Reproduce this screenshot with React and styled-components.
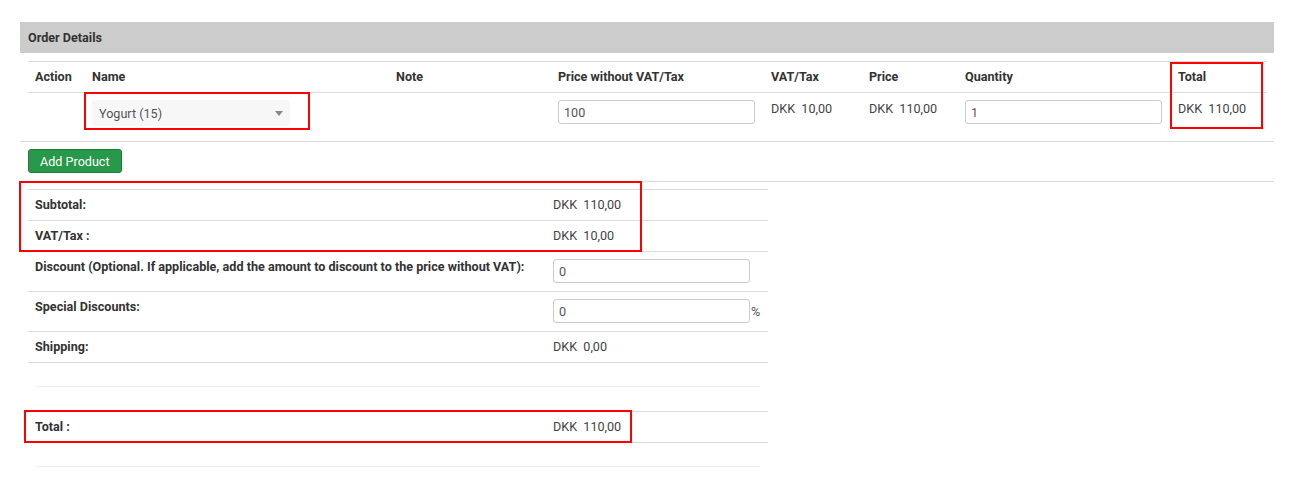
import styled, { createGlobalStyle } from "styled-components";

const Global = createGlobalStyle`
  body {
    margin: 0;
    background: #fff;
    font-family: Roboto, "Liberation Sans", Arial, sans-serif;
    font-size: 12.6px;
    color: #333;
  }
`;

const Page = styled.div`
  position: relative;
  padding: 22px 20px 0;
  width: 1254px;
`;

const PanelHead = styled.div`
  height: 31px;
  line-height: 31px;
  padding-left: 8px;
  background: #cccccc;
  font-weight: 700;
  color: #333;
`;

const OrderTable = styled.table`
  width: 1239px;
  margin: 8px 7px 0 8px;
  border-collapse: separate;
  border-spacing: 0;
  table-layout: fixed;
`;

const Th = styled.th`
  text-align: left;
  font-weight: 700;
  padding: 6px 7px 7px;
  line-height: 17px;
  border-top: 1px solid #dddddd;
  color: #333;
`;

const Td = styled.td`
  vertical-align: top;
  padding: 7px 7px 15px;
  line-height: 17px;
  border-top: 1px solid #dddddd;
  color: #444;
  white-space: nowrap;
`;

const Select = styled.div`
  box-sizing: border-box;
  width: 198px;
  height: 26px;
  display: flex;
  align-items: center;
  justify-content: space-between;
  padding: 0 7px;
  background: #f7f7f7;
  border-radius: 4px;
  color: #555;
`;

const Caret = styled.span`
  width: 0;
  height: 0;
  border-left: 4px solid transparent;
  border-right: 4px solid transparent;
  border-top: 5px solid #888;
`;

const Input = styled.input`
  box-sizing: border-box;
  width: 197px;
  height: 24px;
  padding: 0 5px;
  border: 1px solid #cccccc;
  border-radius: 3px;
  font-family: inherit;
  font-size: 12.6px;
  color: ${(p) => p.$tone || "#555"};
  background: #fff;
  outline: none;
`;

const Money = styled.span`
  display: inline-block;
  color: #444;
`;

const ActionBar = styled.div`
  padding: 7px 8px 8px;
  border-top: 1px solid #dddddd;
  border-bottom: 1px solid #dddddd;
`;

const GreenButton = styled.button`
  box-sizing: border-box;
  height: 24px;
  padding: 0 11px;
  border: 1px solid #1f7e3a;
  border-radius: 3px;
  background: #28984a;
  color: #fff;
  font-family: inherit;
  font-size: 12.6px;
  cursor: pointer;
`;

const SummaryTable = styled.table`
  width: 740px;
  margin: 7px 0 0 8px;
  border-collapse: separate;
  border-spacing: 0;
  table-layout: fixed;
`;

const Label = styled.td`
  vertical-align: top;
  padding: 6px 7px 7px;
  line-height: 17px;
  border-top: 1px solid #dddddd;
  font-weight: 700;
  color: #333;
  white-space: nowrap;
`;

const Value = styled.td`
  vertical-align: top;
  padding: ${(p) => (p.$field ? "7px 7px 8px" : "6px 7px 7px")};
  line-height: 17px;
  border-top: 1px solid #dddddd;
  color: #444;
`;

const FieldWrap = styled.div`
  display: flex;
  align-items: center;
  gap: 1px;
  color: #555;
`;

const SpacerCell = styled.td`
  padding: 23px 8px 24px;
  border-top: 1px solid #dddddd;
`;

const Rule = styled.div`
  height: 1px;
  background: #eeeeee;
`;

const Mark = styled.div`
  position: absolute;
  box-sizing: border-box;
  border: 2px solid #ff0000;
  pointer-events: none;
`;

const marks = [
  { left: 84, top: 92, width: 226, height: 38 },
  { left: 1170, top: 62, width: 93, height: 67 },
  { left: 19, top: 181, width: 623, height: 71 },
  { left: 24, top: 410, width: 608, height: 33 },
];

const dkk = (v) => `DKK\u00a0 ${v}`;

export default function App() {
  return (
    <Page>
      <Global />
      <PanelHead>Order Details</PanelHead>

      <OrderTable>
        <colgroup>
          <col style={{ width: 57 }} />
          <col style={{ width: 304 }} />
          <col style={{ width: 162 }} />
          <col style={{ width: 213 }} />
          <col style={{ width: 98 }} />
          <col style={{ width: 96 }} />
          <col style={{ width: 213 }} />
          <col style={{ width: 96 }} />
        </colgroup>
        <thead>
          <tr>
            <Th>Action</Th>
            <Th>Name</Th>
            <Th>Note</Th>
            <Th>Price without VAT/Tax</Th>
            <Th>VAT/Tax</Th>
            <Th>Price</Th>
            <Th>Quantity</Th>
            <Th>Total</Th>
          </tr>
        </thead>
        <tbody>
          <tr>
            <Td />
            <Td>
              <Select>
                <span>Yogurt (15)</span>
                <Caret />
              </Select>
            </Td>
            <Td />
            <Td>
              <Input defaultValue="100" />
            </Td>
            <Td>
              <Money>{dkk("10,00")}</Money>
            </Td>
            <Td>
              <Money>{dkk("110,00")}</Money>
            </Td>
            <Td>
              <Input defaultValue="1" $tone="#7d4b4b" />
            </Td>
            <Td>
              <Money>{dkk("110,00")}</Money>
            </Td>
          </tr>
        </tbody>
      </OrderTable>

      <ActionBar>
        <GreenButton>Add Product</GreenButton>
      </ActionBar>

      <SummaryTable>
        <colgroup>
          <col style={{ width: 518 }} />
          <col style={{ width: 222 }} />
        </colgroup>
        <tbody>
          <tr>
            <Label>Subtotal:</Label>
            <Value>{dkk("110,00")}</Value>
          </tr>
          <tr>
            <Label>VAT/Tax :</Label>
            <Value>{dkk("10,00")}</Value>
          </tr>
          <tr>
            <Label>Discount (Optional. If applicable, add the amount to discount to the price without VAT):</Label>
            <Value $field>
              <FieldWrap>
                <Input defaultValue="0" />
              </FieldWrap>
            </Value>
          </tr>
          <tr>
            <Label>Special Discounts:</Label>
            <Value $field>
              <FieldWrap>
                <Input defaultValue="0" />
                <span>%</span>
              </FieldWrap>
            </Value>
          </tr>
          <tr>
            <Label>Shipping:</Label>
            <Value>{dkk("0,00")}</Value>
          </tr>
          <tr>
            <SpacerCell colSpan={2}>
              <Rule />
            </SpacerCell>
          </tr>
          <tr>
            <Label>Total :</Label>
            <Value>{dkk("110,00")}</Value>
          </tr>
          <tr>
            <SpacerCell colSpan={2}>
              <Rule />
            </SpacerCell>
          </tr>
        </tbody>
      </SummaryTable>

      {marks.map((m, i) => (
        <Mark key={i} style={m} />
      ))}
    </Page>
  );
}
